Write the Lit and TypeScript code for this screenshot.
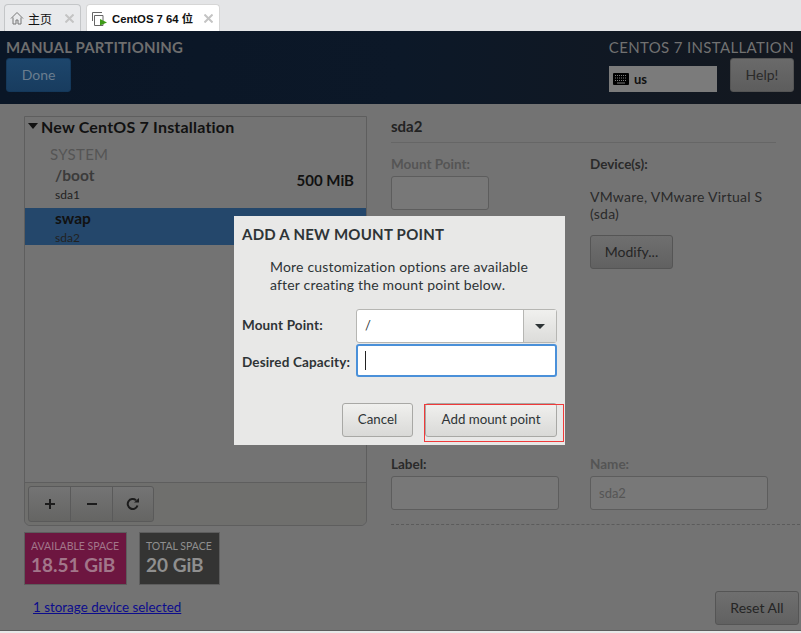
import { LitElement, html, css } from "lit";
import { customElement } from "lit/decorators.js";

@customElement("app-root")
export class AppRoot extends LitElement {
  static styles = css`
    :host { display: block; position: relative; width: 801px; height: 633px; overflow: hidden; background: #e8e8e8; font-family: "Lato", "Noto Sans CJK SC", sans-serif; font-size: 13px; color: #2e3436; }
    * { box-sizing: border-box; }
    .tabbar { height: 31px; background: #e4e5e7; display: flex; align-items: flex-end; padding-left: 4px; gap: 5px; }
    .tab { height: 27px; display: flex; align-items: center; border: 1px solid #c4c6c8; border-bottom: none; border-radius: 4px 4px 0 0; font-family: "Liberation Sans", "Noto Sans CJK SC", sans-serif; font-size: 12px; color: #111; padding-left: 5px; }
    .tab.home { width: 77px; background: #e9eaec; }
    .tab.active { width: 134px; background: #fff; font-weight: 700; font-size: 11.3px; border-color: #d6d6d6; }
    .tab .name { margin-left: 4px; white-space: nowrap; }
    .tab svg { flex: none; }
    .close { margin-left: auto; margin-right: 6px; }
    .header { height: 73px; background: linear-gradient(90deg, #0a1626 0%, #0c1828 50%, #14181f 100%); display: flex; justify-content: space-between; padding: 7px 7px 0 6px; }
    .h-left, .h-right { display: flex; flex-direction: column; }
    .h-right { align-items: flex-end; }
    .h-title { font-size: 15px; line-height: 18px; font-weight: 700; color: #6e6e6e; white-space: nowrap; letter-spacing: 0.15px; }
    .h-title.light { font-weight: 400; color: #717171; letter-spacing: 0.35px; }
    .done { width: 65px; height: 34px; margin-top: 2px; padding-bottom: 2px; background: linear-gradient(#1d466c, #183c5f); border: 1px solid #14385a; border-radius: 3px; color: #6a7d8f; display: flex; align-items: center; justify-content: center; font-size: 14px; }
    .h-row { display: flex; margin-top: 2px; gap: 13px; }
    .kbd { width: 108px; height: 26px; margin-top: 8px; background: #7b7b7b; display: flex; align-items: center; padding-left: 4px; gap: 5px; color: #111; font-weight: 700; font-size: 13px; }
    .help { width: 64px; height: 34px; padding-bottom: 2px; background: linear-gradient(#6a6a6a, #5d5d5d); border: 1px solid #545454; border-radius: 3px; display: flex; align-items: center; justify-content: center; font-size: 14px; color: #2a2a2a; }
    .main { height: 527px; background: #737373; border-bottom: 1px solid #5c5c5c; display: flex; padding: 12px 1px 0 24px; }
    .left { width: 343px; flex: none; display: flex; flex-direction: column; }
    .panel { height: 410px; border: 1px solid #5e5e5e; border-radius: 0 0 6px 6px; display: flex; flex-direction: column; }
    .group { height: 24px; padding: 0 0 6px 3px; display: flex; align-items: center; gap: 3px; font-size: 16px; letter-spacing: 0.2px; font-weight: 700; color: #111; }
    .group i { width: 0; height: 0; border: 5px solid transparent; border-top: 6px solid #111; border-bottom: 0; }
    .system { margin: 4px 0 0 25px; font-size: 15px; line-height: 18px; color: #555; letter-spacing: 0.3px; }
    .row { position: relative; padding-left: 30px; display: flex; flex-direction: column; }
    .row.boot { height: 45px; padding-top: 3px; }
    .row.sel { height: 37px; padding-top: 1px; background: #24476b; }
    .row b { font-size: 15.5px; line-height: 19px; margin-bottom: 2px; font-weight: 700; color: #3b3b3b; }
    .row.sel b { color: #111; }
    .row small { font-size: 12px; line-height: 15px; color: #222; }
    .row .size { position: absolute; right: 12px; top: 8px; font-size: 15px; font-weight: 700; color: #111; }
    .spacer { flex: 1; }
    .tools { height: 43px; border-top: 1px solid #5e5e5e; padding: 3px 3px; background: #6f6f6d; border-radius: 0 0 6px 6px; }
    .btns { display: inline-flex; height: 36px; border: 1px solid #5a5a5a; border-radius: 3px; background: linear-gradient(#747474, #656563); }
    .btns span { width: 42px; display: flex; align-items: center; justify-content: center; border-left: 1px solid #5a5a5a; }
    .btns span:first-child { width: 41px; border-left: none; }
    .btns span:last-child { width: 41px; }
    .stats { display: flex; gap: 12px; margin-top: 6px; }
    .stat { height: 53px; border: 1px solid #5d5d5d; padding: 7px 6px 0; color: #8f8f8f; }
    .stat.a { width: 103px; background: #6d1640; color: #a2768a; }
    .stat.t { width: 81px; background: #343433; }
    .stat p { margin: 0; font-size: 10.5px; line-height: 13px; white-space: nowrap; }
    .stat strong { display: block; font-size: 19px; line-height: 24px; font-weight: 700; }
    .bottom { display: flex; justify-content: space-between; }
    .link { margin: 13px 0 0 9px; color: #0c0c8c; text-decoration: underline; font-size: 13.4px; line-height: 18px; }
    .right { flex: 1; margin-left: 24px; display: flex; flex-direction: column; position: relative; }
    .r-title { width: 385px; height: 27px; border-bottom: 1px solid #666; font-size: 15px; font-weight: 700; color: #222; line-height: 20px; }
    .cols { display: flex; margin-top: 13px; }
    .c1 { width: 199px; }
    .lbl { font-size: 13.5px; font-weight: 700; line-height: 16px; color: #2a2a2a; }
    .lbl.dim { color: #555; }
    .field { height: 34px; border: 1px solid #5d5d5d; border-radius: 3px; background: #787878; margin-top: 4px; padding-left: 8px; display: flex; align-items: center; color: #555; }
    .f-mount { width: 98px; }
    .f-wide { width: 168px; }
    .f-name { width: 178px; }
    .dev { margin: 16px 0 13px; line-height: 17px; color: #2a2a2a; font-size: 14px; letter-spacing: 0.25px; white-space: nowrap; }
    .btn { height: 34px; padding-bottom: 2px; display: inline-flex; align-items: center; justify-content: center; border: 1px solid #555; border-radius: 3px; background: linear-gradient(#6f6f6f, #616161); color: #252525; font-size: 14px; }
    .modify { width: 83px; }
    .cols.low { margin-top: 187px; }
    .dash { margin-top: 14px; border-top: 1px dashed #5b5b5b; width: 409px; }
    .reset { width: 84px; position: absolute; right: 1px; top: 475px; }
    .dialog { position: absolute; left: 234px; top: 216px; width: 331px; height: 229px; background: #e8e8e7; padding: 9px 8px 0; }
    .d-title { font-size: 15px; line-height: 19px; font-weight: 700; color: #2e3436; letter-spacing: 0.25px; }
    .d-text { margin: 14px 0 0 28px; font-size: 14px; line-height: 18px; color: #2e3436; letter-spacing: 0.18px; }
    .d-row { display: flex; align-items: center; }
    .d-row label { width: 114px; font-weight: 700; font-size: 13.5px; letter-spacing: 0.15px; color: #2e3436; white-space: nowrap; }
    .d-row.one { margin-top: 15px; }
    .d-row.one label { padding-bottom: 2px; }
    .d-row.two label { padding-top: 3px; }
    .combo { width: 201px; height: 34px; display: flex; border: 1px solid #b6b6b3; border-radius: 3px; background: #fff; }
    .combo .v { flex: 1; padding-left: 8px; line-height: 30px; font-size: 13px; }
    .combo .arr { width: 33px; border-left: 1px solid #b6b6b3; background: linear-gradient(#f0f0ee, #dcdcda); display: flex; align-items: center; justify-content: center; }
    .combo .arr i { width: 0; height: 0; border: 5px solid transparent; border-top: 5px solid #2e3436; border-bottom: 0; }
    .cap { width: 201px; height: 33px; border: 2px solid #4a90d9; border-radius: 3px; background: #fff; margin-top: 1px; padding: 5px 7px; }
    .cap i { display: block; width: 1px; height: 19px; background: #222; }
    .d-btns { display: flex; justify-content: flex-end; gap: 12px; margin-top: 26px; }
    .d-btn { height: 34px; padding-bottom: 3px; display: flex; align-items: center; justify-content: center; border: 1px solid #a8a8a5; border-radius: 3px; background: linear-gradient(#f0f0ee, #d9d9d7); color: #2e3436; font-size: 13.3px; }
    .cancel { width: 71px; }
    .add { width: 132px; }
    .marker { position: absolute; left: 424px; top: 404px; width: 140px; height: 38px; border: 1px solid #f03a3a; }
  `;

  render() {
    const x = html`<svg class="close" width="9" height="9" viewBox="0 0 9 9"><path d="M0.5 0.5L8.5 8.5M8.5 0.5L0.5 8.5" stroke="#c4c4c4" stroke-width="2"/></svg>`;
    return html`
      <div class="tabbar">
        <div class="tab home">
          <svg width="14" height="14" viewBox="0 0 14 14" fill="none" stroke="#777" stroke-width="1"><path d="M1 7.5L7 1.5L13 7.5M3 6.5V13H6V9H8V13H11V6.5"/></svg>
          <span class="name">主页</span>${x}
        </div>
        <div class="tab active">
          <svg width="16" height="16" viewBox="0 0 16 16"><path d="M0.5 11V2.5H10M2.5 5.5H11V15.5H2.5Z" fill="none" stroke="#666"/><path d="M8 9L15 12.5L8 15.5Z" fill="#3f9b18"/></svg>
          <span class="name">CentOS 7 64 位</span>${x}
        </div>
      </div>
      <div class="header">
        <div class="h-left">
          <div class="h-title">MANUAL PARTITIONING</div>
          <div class="done">Done</div>
        </div>
        <div class="h-right">
          <div class="h-title light">CENTOS 7 INSTALLATION</div>
          <div class="h-row">
            <div class="kbd">
              <svg width="16" height="12" viewBox="0 0 16 12"><rect width="16" height="12" rx="1" fill="#000"/><path d="M2 2.5h12M2 5h12M2 7.5h12" stroke="#7b7b7b" stroke-dasharray="1 1"/><path d="M4 10h8" stroke="#7b7b7b"/></svg>
              <span>us</span>
            </div>
            <div class="help">Help!</div>
          </div>
        </div>
      </div>
      <div class="main">
        <div class="left">
          <div class="panel">
            <div class="group"><i></i><span>New CentOS 7 Installation</span></div>
            <div class="system">SYSTEM</div>
            <div class="row boot"><b>/boot</b><small>sda1</small><span class="size">500 MiB</span></div>
            <div class="row sel"><b>swap</b><small>sda2</small></div>
            <div class="spacer"></div>
            <div class="tools">
              <div class="btns">
                <span><svg width="12" height="12" viewBox="0 0 12 12"><path d="M6 1V11M1 6H11" stroke="#1c1c1c" stroke-width="2"/></svg></span>
                <span><svg width="12" height="12" viewBox="0 0 12 12"><path d="M1 6H11" stroke="#1c1c1c" stroke-width="2"/></svg></span>
                <span><svg width="14" height="14" viewBox="0 0 14 14" fill="none"><path d="M11.5 8.5A5 5 0 1 1 10 3.2" stroke="#1c1c1c" stroke-width="2"/><path d="M8 5.5H13V1Z" fill="#1c1c1c"/></svg></span>
              </div>
            </div>
          </div>
          <div class="stats">
            <div class="stat a"><p>AVAILABLE SPACE</p><strong>18.51 GiB</strong></div>
            <div class="stat t"><p>TOTAL SPACE</p><strong>20 GiB</strong></div>
          </div>
          <div class="bottom"><span class="link">1 storage device selected</span></div>
        </div>
        <div class="right">
          <div class="r-title">sda2</div>
          <div class="cols">
            <div class="c1"><div class="lbl dim">Mount Point:</div><div class="field f-mount"></div></div>
            <div>
              <div class="lbl">Device(s):</div>
              <div class="dev">VMware, VMware Virtual S<br />(sda)</div>
              <div class="btn modify">Modify...</div>
            </div>
          </div>
          <div class="cols low">
            <div class="c1"><div class="lbl">Label:</div><div class="field f-wide"></div></div>
            <div><div class="lbl dim">Name:</div><div class="field f-name">sda2</div></div>
          </div>
          <div class="dash"></div>
          <div class="btn reset">Reset All</div>
        </div>
      </div>
      <div class="dialog">
        <div class="d-title">ADD A NEW MOUNT POINT</div>
        <div class="d-text">More customization options are available<br />after creating the mount point below.</div>
        <div class="d-row one"><label>Mount Point:</label><div class="combo"><div class="v">/</div><div class="arr"><i></i></div></div></div>
        <div class="d-row two"><label>Desired Capacity:</label><div class="cap"><i></i></div></div>
        <div class="d-btns"><div class="d-btn cancel">Cancel</div><div class="d-btn add">Add mount point</div></div>
      </div>
      <div class="marker"></div>
    `;
  }
}
